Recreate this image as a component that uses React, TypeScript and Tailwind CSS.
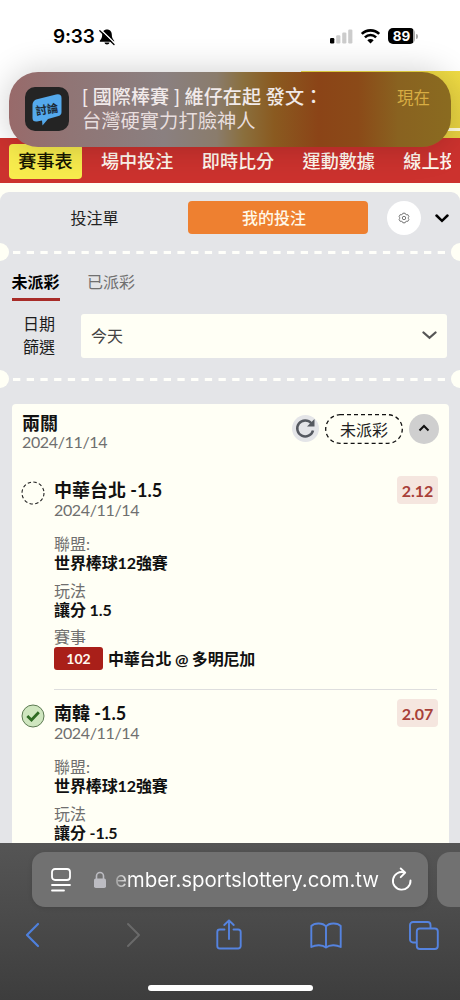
import React from 'react';

interface Bet {
  team: string;
  date: string;
  odds: string;
  play: string;
  won: boolean;
  code?: string;
  match?: string;
}

const navItems = ['場中投注', '即時比分', '運動數據', '線上投'];

const bets: Bet[] = [
  {
    team: '中華台北 -1.5',
    date: '2024/11/14',
    odds: '2.12',
    play: '讓分 1.5',
    won: false,
    code: '102',
    match: '中華台北 @ 多明尼加',
  },
  {
    team: '南韓 -1.5',
    date: '2024/11/14',
    odds: '2.07',
    play: '讓分 -1.5',
    won: true,
  },
];

function StatusBar() {
  return (
    <div className="flex h-[71px] items-start pt-[26px] pl-[53px] pr-[42px] font-['Inter','Liberation_Sans',sans-serif]">
      <span className="text-[19px] leading-[22px] font-semibold tracking-[-0.2px] text-black">9:33</span>
      <svg className="mt-[1px] ml-[3px]" width="18" height="20" viewBox="0 0 18 20">
        <path d="M9 2.4c-3 0-4.8 2.2-4.8 5.2 0 3.2-.8 4.3-2.2 5.8-.5.6-.2 1.4.6 1.4h12.8c.8 0 1.1-.8.6-1.4-1.4-1.5-2.2-2.6-2.2-5.8 0-3-1.8-5.2-4.8-5.2zM6.5 15.6h5c-.2 1.2-1.2 2-2.5 2s-2.3-.8-2.5-2z" fill="#000" />
        <path d="M2.800 2.800l14.500 14" stroke="#fff" strokeWidth="1.500" />
        <path d="M1.800 3.800l14.200 13.700" stroke="#000" strokeWidth="1.300" strokeLinecap="round" />
      </svg>
      <div className="ml-auto flex items-start pt-[2px]">
        <svg width="24" height="17" viewBox="0 0 24 17">
          <rect x="0" y="10" width="4.300" height="5.500" rx="1.200" fill="#000" />
          <rect x="6.200" y="7.300" width="4.200" height="8.200" rx="1.200" fill="#ccc" />
          <rect x="12.200" y="4.500" width="4.200" height="11" rx="1.200" fill="#ccc" />
          <rect x="18.200" y="1.500" width="4.200" height="14" rx="1.200" fill="#ccc" />
        </svg>
        <svg className="ml-[6px]" width="21" height="17" viewBox="0 0 21 17">
          <path d="M1.800 5.900a12.500 12.500 0 0 1 17.400 0" fill="none" stroke="#000" strokeWidth="2.700" />
          <path d="M4.900 9.400a8 8 0 0 1 11.200 0" fill="none" stroke="#000" strokeWidth="2.500" />
          <path d="M7.300 12.300a4.600 4.600 0 0 1 6.400 0l-3.200 3.300z" fill="#000" />
        </svg>
        <div className="ml-[7px] flex items-center">
          <div className="h-[16px] w-[27px] rounded-[5px] bg-[linear-gradient(90deg,#000_91%,#aaa_91%)] text-center text-[13.5px] leading-[16px] font-bold text-white">
            89
          </div>
          <div className="ml-[1px] h-[5px] w-[2px] rounded-r-full bg-[#aaa]" />
        </div>
      </div>
    </div>
  );
}

function Notification() {
  return (
    <div className="absolute top-[72px] left-[9px] flex h-[75px] w-[442px] rounded-[29px] bg-[linear-gradient(90deg,#986a6a_0%,#907575_14%,#8a8080_35%,#8a7c6c_47%,#8a6f3d_53%,#8a5a20_60%,#8b4417_70%,#8b4a18_79%,#896220_88%,#8a6b20_100%)] pt-[15px] pr-[21px] pl-[16px] shadow-[0_0_34px_rgba(0,0,0,0.2)]">
      <div className="flex h-[44px] w-[44px] shrink-0 items-center justify-center rounded-[10px] bg-[#242424]">
        <svg width="34" height="40" viewBox="0 0 34 40">
          <path d="M6 10.500L26 5.500Q31.500 4.500 31.500 9V23Q31.500 26 28.500 27L18 30 12.500 36.500 12 31.500 7 32.500Q2.500 33 2.500 29V16Q2.500 12 6 10.500z" fill="#54a9ec" />
          <text x="5.500" y="24.500" fontSize="11.500" fontWeight="700" fill="#1d2b38" transform="rotate(-9 17 21)" className="font-['Noto_Sans_CJK_TC',sans-serif]">討論</text>
        </svg>
      </div>
      <div className="ml-[13px] flex-1 text-[19.100px] leading-[24px] whitespace-nowrap text-[#f1eaea]">
        <p className="-mt-[2px] font-medium">[ 國際棒賽 ] 維仔在起 發文：</p>
        <p className="text-[19.3px] text-[#e8dede]">台灣硬實力打臉神人</p>
      </div>
      <span className="text-[16.5px] leading-[22px] text-[#d8ad43]">現在</span>
    </div>
  );
}

function SiteHeader() {
  return (
    <div className="flex h-[67px] bg-white">
      <div className="w-[301px]" />
      <div className="flex-1 bg-[linear-gradient(180deg,#f0dc44,#e6d040)] pt-[57px]">
        <div className="h-[3px] bg-[#fffbe0]" />
      </div>
    </div>
  );
}

function NavBar() {
  return (
    <div className="h-[45px] bg-[#cc322e] pt-[5px] pr-[9px] pl-[9px]">
      <div className="flex items-center overflow-hidden text-[18.100px] leading-[35px] font-medium whitespace-nowrap text-[#fff8ee]">
        <span className="h-[35px] w-[73px] shrink-0 rounded-[4px] bg-[#f8ec4d] text-center text-[#161600]">賽事表</span>
        <div className="ml-[19px] flex gap-[28.400px] pt-px">
          {navItems.map((item) => (
            <span key={item}>{item}</span>
          ))}
        </div>
      </div>
    </div>
  );
}

function TicketDivider() {
  return (
    <div className="flex h-[18px] items-center justify-between">
      <div className="h-[18px] w-[9px] rounded-r-full bg-[#fffff5]" />
      <svg width="434" height="3" viewBox="0 0 434 3">
        <path d="M0 1.500H434" stroke="#fffffa" strokeWidth="3" strokeDasharray="7.300 6.400" />
      </svg>
      <div className="h-[18px] w-[9px] rounded-l-full bg-[#fffff5]" />
    </div>
  );
}

function Filters() {
  return (
    <div className="rounded-t-[9px] bg-[#e4e5e8] text-[16px]">
      <div className="flex h-[51px] items-center">
        <span className="w-[188px] pl-px text-center text-[#222]">投注單</span>
        <span className="h-[33px] w-[180px] rounded-[4px] bg-[#ee8030] pr-[8px] text-center leading-[33px] font-medium text-[#fff8e8]">
          我的投注
        </span>
        <div className="ml-[19px] flex h-[34px] w-[34px] items-center justify-center rounded-full bg-white">
          <svg width="12" height="12" viewBox="0 0 12 12" fill="none" stroke="#555" strokeWidth=".8">
            <path d="M4.900 1.200h2.200l.5 1.100 1.200.5 1.100-.1 1 1.900-.6 1 0 .8.6 1-1 1.900-1.100-.1-1.200.5-.5 1.100H4.900l-.5-1.100-1.200-.5-1.100.1-1-1.900.6-1v-.8l-.6-1 1-1.900 1.100.1 1.200-.5z" />
            <circle cx="6" cy="6" r="1.700" />
          </svg>
        </div>
        <svg className="mt-[1px] ml-[14px]" width="14" height="9" viewBox="0 0 14 9">
          <path d="M1.500 1.500L7 6.800l5.500-5.300" fill="none" stroke="#000" strokeWidth="2.500" strokeLinecap="round" />
        </svg>
      </div>
      <TicketDivider />

      {/* Payout tabs */}
      <div className="mt-[9px] flex h-[31px] gap-[27.500px] pl-[11.500px] leading-[24px]">
        <span className="border-b-[3px] border-[#a82c28] font-bold text-black">未派彩</span>
        <span className="text-[#707070]">已派彩</span>
      </div>

      {/* Date filter */}
      <div className="mt-[12px] flex h-[45px] items-center pl-[15px]">
        <div className="-mt-[2px] w-[48px] text-center leading-[23px] text-[#1c1c1c]">
          日期
          <br />
          篩選
        </div>
        <div className="ml-[18px] flex h-[44px] w-[366px] items-center justify-between rounded-[3px] bg-[#fffff5] pr-[10px] pl-[10px] text-[#444]">
          <span>今天</span>
          <svg width="15" height="9" viewBox="0 0 15 9">
            <path d="M1.500 1.500l6 5.300 6-5.300" fill="none" stroke="#555" strokeWidth="2.300" strokeLinecap="round" />
          </svg>
        </div>
      </div>
      <div className="h-[12px]" />
      <TicketDivider />
    </div>
  );
}

function BetStatus({ won }: { won: boolean }) {
  return (
    <svg className="mt-px shrink-0" width="24" height="24" viewBox="0 0 24 24" fill="none">
      {won ? (
        <>
          <circle cx="12" cy="12" r="11" fill="#cfe6bf" stroke="#5c7a52" strokeWidth="1" />
          <path d="M6.300 12l4.200 4 7.300-7.700" stroke="#2f6b23" strokeWidth="2.800" />
        </>
      ) : (
        <circle cx="12" cy="12" r="11" stroke="#222" strokeWidth="1.100" strokeDasharray="3.400 2.360" />
      )}
    </svg>
  );
}

function Detail({ label, value }: { label: string; value: string }) {
  return (
    <div className="h-[46.500px]">
      <p className="leading-[19px] text-[#6f6f6f]">{label}</p>
      <p className="leading-[20px] font-bold tracking-[-0.100px] text-[#111]">{value}</p>
    </div>
  );
}

function BetItem({ bet }: { bet: Bet }) {
  return (
    <div className="flex h-[223px] pt-[13px]">
      <BetStatus won={bet.won} />
      <div className="relative ml-[9px] w-[383px] text-[16px]">
        <div className="flex items-start">
          <div className="flex-1">
            <p className="text-[18px] leading-[20px] font-bold text-[#111]">{bet.team}</p>
            <p className="text-[16px] leading-[19px] tracking-[-0.350px] text-[#6f6f6f]">{bet.date}</p>
          </div>
          <span className="-mt-[4px] -mr-[1px] h-[28px] w-[41px] rounded-[4px] bg-[#f5e6df] text-center text-[16px] leading-[29px] font-bold text-[#a84038]">
            {bet.odds}
          </span>
        </div>
        <div className="mt-[15px]">
          <Detail label="聯盟:" value="世界棒球12強賽" />
          <Detail label="玩法" value={bet.play} />
        </div>
        <p className="leading-[19px] text-[#6f6f6f]">賽事</p>
        {bet.match && (
          <div className="mt-[1px] flex items-center font-bold">
            <span className="h-[23px] w-[49px] rounded-[3px] bg-[#a91f19] text-center text-[14px] leading-[23px] text-[#fff8f0]">{bet.code}</span>
            <span className="ml-[5px] leading-[23px] tracking-[-0.200px] whitespace-nowrap text-[#111]">{bet.match}</span>
          </div>
        )}
        <div className="absolute right-0 bottom-0 left-0 h-px bg-[#dedede]" />
      </div>
    </div>
  );
}

function BetCard() {
  return (
    <div className="flex-1 bg-[#e4e5e8] px-[11.500px] pt-[16px]">
      <div className="h-[460px] rounded-t-[4px] bg-[#fffff5] px-[9.500px] pt-[9px]">
        <div className="flex h-[54px] items-start pl-[1px]">
          <div className="flex-1">
            <p className="text-[18px] leading-[20px] font-bold text-[#111]">兩關</p>
            <p className="text-[16px] leading-[18px] tracking-[-0.350px] text-[#6f6f6f]">2024/11/14</p>
          </div>
          <div className="mt-[2px] flex h-[27px] w-[27px] items-center justify-center rounded-full bg-[#e4e5e8]">
            <svg width="21" height="21" viewBox="0 0 21 21">
              <path d="M18 12.500a8 8 0 1 1-1.700-7.300" fill="none" stroke="#555960" strokeWidth="2.500" />
              <path d="M19.500 1v7.500H12z" fill="#555960" />
            </svg>
          </div>
          <div className="relative mt-px ml-[6px] h-[30px] w-[78px] text-center text-[16px] leading-[32px] text-[#222]">
            <svg className="absolute inset-0" width="78" height="30" viewBox="0 0 78 30">
              <rect x=".7" y=".7" width="76.600" height="28.600" rx="14.300" fill="none" stroke="#111" strokeWidth="1.300" strokeDasharray="4 3" />
            </svg>
            未派彩
          </div>
          <div className="mt-px ml-[6px] flex h-[30px] w-[30px] items-center justify-center rounded-full bg-[#cfcfcf]">
            <svg className="-mt-[2px]" width="12" height="8" viewBox="0 0 12 8">
              <path d="M1.500 6.500L6 2l4.500 4.500" fill="none" stroke="#111" strokeWidth="2" />
            </svg>
          </div>
        </div>
        {bets.map((bet) => (
          <BetItem key={bet.team} bet={bet} />
        ))}
      </div>
    </div>
  );
}

function BrowserBar() {
  return (
    <div className="absolute bottom-0 left-0 h-[157px] w-full bg-[linear-gradient(180deg,#555_0%,#4b4b4b_45%,#464646_65%,#3d3d3d_100%)] pt-[9px]">
      <div className="flex gap-[9px] pl-[32px]">
        <div className="flex h-[55px] w-[396px] shrink-0 items-center rounded-[13px] bg-[#717171] pl-[18px] shadow-[0_1px_5px_rgba(0,0,0,0.12)]">
          <svg width="22" height="24" viewBox="0 0 22 24" fill="none" stroke="#fff" strokeWidth="1.800" strokeLinecap="round">
            <rect x="2" y="1" width="18" height="11" rx="3" />
            <path d="M2 17h18M2 22.500h12" />
          </svg>
          <svg className="ml-[21px]" width="14" height="18" viewBox="0 0 14 18">
            <path d="M3.500 8V5a3.500 3.500 0 0 1 7 0v3" fill="none" stroke="#bcbcc2" strokeWidth="1.600" />
            <rect x="1" y="7.500" width="12" height="9.500" rx="1.800" fill="#bcbcc2" />
          </svg>
          <span className="ml-[8px] w-[265px] bg-[linear-gradient(90deg,#999_0%,#fff_6%)] bg-clip-text font-['Inter','Liberation_Sans',sans-serif] text-[20.500px] leading-[28px] tracking-[-0.080px] whitespace-nowrap text-transparent">
            ember.sportslottery.com.tw
          </span>
          <svg className="ml-[11px]" width="22" height="25" viewBox="0 0 22 25" fill="none" stroke="#fff" strokeWidth="1.900" strokeLinecap="round" strokeLinejoin="round">
            <path d="M19.500 13.500A8.800 8.800 0 1 1 13.500 5.500" />
            <path d="M9.700 1.500l4.500 4.200-4.500 4.500" />
          </svg>
        </div>
        <div className="h-[55px] w-[40px] shrink-0 rounded-[13px] bg-[#717171]" />
      </div>

      {/* Bottom toolbar */}
      <div className="mt-[10px] flex h-[36px] items-center pl-[24px]">
        <svg width="16" height="26" viewBox="0 0 16 26" fill="none" stroke="#4f80dc" strokeWidth="2.200" strokeLinecap="round" strokeLinejoin="round">
          <path d="M14 2L3 13l11 11" />
        </svg>
        <svg className="ml-[85px]" width="16" height="26" viewBox="0 0 16 26" fill="none" stroke="#6a6a6a" strokeWidth="2" strokeLinecap="round" strokeLinejoin="round">
          <path d="M3 2l11 11L3 24" />
        </svg>
        <svg className="ml-[75px]" width="26" height="32" viewBox="0 0 26 32" fill="none" stroke="#5583df" strokeWidth="1.900" strokeLinecap="round" strokeLinejoin="round">
          <path d="M8.500 10.500H3.800A2.500 2.500 0 0 0 1.300 13v14a2.500 2.500 0 0 0 2.500 2.500h18.400a2.500 2.500 0 0 0 2.500-2.500V13a2.500 2.500 0 0 0-2.500-2.500h-4.700M13 20V1.500M8.300 6L13 1.300 17.700 6" />
        </svg>
        <svg className="ml-[68px]" width="32" height="27" viewBox="0 0 32 27" fill="none" stroke="#5583df" strokeWidth="1.900" strokeLinejoin="round">
          <path d="M16 4.500C12.500 0 4 1 1.300 4v21c4.500-2.500 11-2.500 14.700 0.500 3.700-3 10.200-3 14.700-.5V4C28 1 19.500 0 16 4.500zM16 4.500v21" />
        </svg>
        <svg className="ml-[67px]" width="30" height="29" viewBox="0 0 30 29" fill="none" stroke="#5583df" strokeWidth="1.900">
          <path d="M7.500 21.500H4A3 3 0 0 1 1 18.500V4a3 3 0 0 1 3-3h14.500a3 3 0 0 1 3 3v3" />
          <rect x="7.800" y="7.500" width="21" height="20.500" rx="3" />
        </svg>
      </div>
      <div className="mx-auto mt-[32px] h-[6px] w-[165px] rounded-full bg-white" />
    </div>
  );
}

export default function App() {
  return (
    <div className="relative flex h-[1000px] w-[460px] flex-col overflow-hidden bg-white font-['Lato','Noto_Sans_CJK_TC',sans-serif]">
      <StatusBar />
      <SiteHeader />
      <NavBar />
      <div className="flex flex-1 flex-col bg-[#fffff5] pt-[9px]">
        <Filters />
        <BetCard />
      </div>
      <Notification />
      <BrowserBar />
    </div>
  );
}
